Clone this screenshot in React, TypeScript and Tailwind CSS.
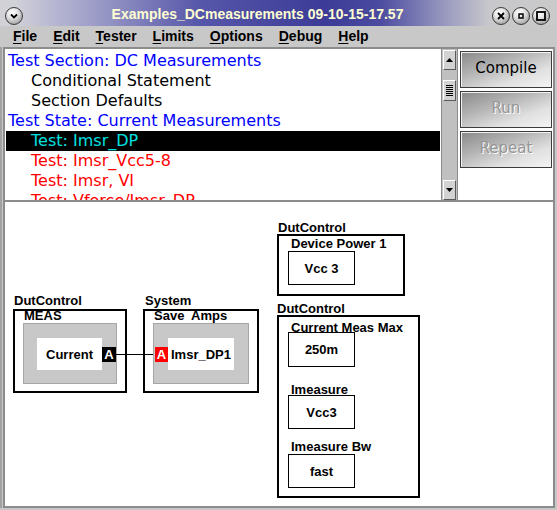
import React from 'react';

const rows = [
  { text: 'Test Section: DC Measurements', cls: 'pl-[2px] text-[#0000ff]' },
  { text: 'Conditional Statement', cls: 'pl-[25px] text-black' },
  { text: 'Section Defaults', cls: 'pl-[25px] text-black' },
  { text: 'Test State: Current Measurements', cls: 'pl-[2px] text-[#0000ff]' },
  { text: 'Test: Imsr_DP', cls: 'pl-[25px] bg-black text-[#00e0e0]' },
  { text: 'Test: Imsr_Vcc5-8', cls: 'pl-[25px] text-[#ff0000]' },
  { text: 'Test: Imsr, VI', cls: 'pl-[25px] text-[#ff0000]' },
  { text: 'Test: Vforce/Imsr_DP', cls: 'pl-[25px] text-[#ff0000]' },
];

const menus = ['File', 'Edit', 'Tester', 'Limits', 'Options', 'Debug', 'Help'];

function Circle({ children }: { children?: React.ReactNode }) {
  return (
    <div className="flex h-[18px] w-[18px] items-center justify-center rounded-full border border-[#3a3a3a] bg-[radial-gradient(circle_at_40%_30%,#ffffff_0%,#e6e6e6_35%,#aaaaaa_75%,#7a7a7a_100%)]">
      {children}
    </div>
  );
}

function ArrowButton({ down }: { down?: boolean }) {
  return (
    <div className="flex h-[20px] w-[13px] items-center justify-center border border-t-white border-l-white border-r-[#5a5a5a] border-b-[#5a5a5a] bg-[#d2d2d2]">
      <svg width="7" height="4" viewBox="0 0 7 4">
        <path d={down ? 'M0 0 H7 L3.5 4 Z' : 'M0 4 H7 L3.5 0 Z'} fill="#000" />
      </svg>
    </div>
  );
}

function ActionButton({ label, disabled }: { label: string; disabled?: boolean }) {
  return (
    <div
      className={`flex h-[37px] w-[92px] items-center justify-center border border-[#3c3c3c] bg-[linear-gradient(160deg,#888888_0%,#b8b8b8_40%,#e0e0e0_70%,#f4f4f4_100%)] shadow-[inset_1px_1px_0_#f2f2f2] pb-[3px] text-[15px] ${
        disabled ? 'text-[#969696] [text-shadow:1px_1px_0_#ffffff]' : 'text-black'
      }`}
    >
      {label}
    </div>
  );
}

function ValueBox({ children, tall }: { children: React.ReactNode; tall?: boolean }) {
  return (
    <div className={`flex w-[67px] items-center justify-center border border-black ${tall ? 'h-[35px]' : 'h-[34px]'}`}>
      {children}
    </div>
  );
}

export default function App() {
  return (
    <div className="h-[510px] w-[557px] overflow-hidden bg-[#c8c8c8] font-['Liberation_Sans',Arial,sans-serif]">
      {/* Title bar */}
      <div className="flex h-[26px] items-center pt-[3px] bg-[linear-gradient(to_right,#d2d2d6_0%,#d0d0d8_3%,#b6b6d2_10%,#5656aa_36%,#3c3c98_58%,#4a4aa0_68%,#9a9ac0_80%,#c8c8cc_88%,#cacaca_100%)]">
        <div className="ml-[5px] mt-[2px]">
          <Circle>
            <svg width="10" height="10" viewBox="0 0 10 10">
              <path d="M2 3.5 L5 6.5 L8 3.5" stroke="#000" strokeWidth="1.8" fill="none" />
            </svg>
          </Circle>
        </div>
        <div className="flex-1 text-center text-[14px] font-bold text-[#ffffd2]">
          Examples_DCmeasurements 09-10-15-17.57
        </div>
        <div className="mr-[7px] mt-[2px] flex gap-[2px]">
          <Circle>
            <svg width="8" height="8" viewBox="0 0 8 8">
              <path d="M1 1 L7 7 M7 1 L1 7" stroke="#000" strokeWidth="1.8" />
            </svg>
          </Circle>
          <Circle>
            <svg width="6" height="6" viewBox="0 0 6 6">
              <rect x="1" y="1" width="4" height="4" stroke="#000" strokeWidth="1.5" fill="none" />
            </svg>
          </Circle>
          <Circle>
            <svg width="10" height="10" viewBox="0 0 10 10">
              <rect x="1" y="1" width="8" height="8" stroke="#000" strokeWidth="1.8" fill="none" />
            </svg>
          </Circle>
        </div>
      </div>

      {/* Menu bar */}
      <div className="flex h-[21px] gap-[16px] pl-[13px] text-[14px] font-bold leading-[20px] text-black">
        {menus.map((m) => (
          <span key={m}>
            <span className="underline underline-offset-2">{m[0]}</span>
            {m.slice(1)}
          </span>
        ))}
      </div>

      <div className="border-l-2 border-[#a2a2a2] pl-px">
        {/* Test list, scrollbar and buttons */}
        <div className="flex h-[155px] w-[552px] border-2 border-[#8c8c8c] bg-white">
          <div className="w-[436px] overflow-hidden pl-px pr-px pt-[2px] font-['DejaVu_Sans',sans-serif] text-[16px] leading-[20px]">
            {rows.map((r) => (
              <div key={r.text} className={`h-[20px] whitespace-nowrap ${r.cls}`}>
                {r.text}
              </div>
            ))}
          </div>
          <div className="flex w-[17px] flex-col border-x border-[#8c8c8c] bg-[#c0c0c0] px-px pt-px">
            <ArrowButton />
            <div className="mt-[10px] flex h-[21px] w-[13px] flex-col items-center justify-center gap-px border border-t-white border-l-white border-r-[#5a5a5a] border-b-[#5a5a5a] bg-[#d2d2d2]">
              <div className="h-px w-[7px] bg-black" />
              <div className="h-px w-[7px] bg-black" />
              <div className="h-px w-[7px] bg-black" />
              <div className="h-px w-[7px] bg-black" />
              <div className="h-px w-[7px] bg-black" />
              <div className="h-px w-[7px] bg-black" />
            </div>
            <div className="mt-auto">
              <ArrowButton down />
            </div>
          </div>
          <div className="flex w-[95px] flex-col gap-[3px] pl-[2px] pt-[2px] font-['DejaVu_Sans',sans-serif]">
            <ActionButton label="Compile" />
            <ActionButton label="Run" disabled />
            <ActionButton label="Repeat" disabled />
          </div>
        </div>

        {/* Diagram canvas: nodes sit at their own places */}
        <div className="relative h-[306px] w-[552px] border-x-2 border-b-2 border-[#8c8c8c] bg-white text-[13px] font-bold leading-[15px] text-black">
          {/* DutControl / MEAS */}
          <div className="absolute left-[8px] top-[91px] w-[114px]">
            <div className="h-[16px] pl-px">DutControl</div>
            <div className="h-[84px] border-2 border-black">
              <div className="-mt-[3px] h-[15px] pl-[9px]">MEAS</div>
              <div className="ml-[8px] flex h-[61px] w-[94px] items-start border border-[#a6a6a6] bg-[#c8c8c8] pl-[13px] pt-[14px]">
                <div className="flex h-[32px] w-[65px] items-center justify-center bg-white">Current</div>
                <div className="mt-[9px] flex h-[15px] w-[14px] items-center justify-center bg-black text-white">A</div>
              </div>
            </div>
          </div>

          {/* wire between the two ports */}
          <div className="absolute left-[111px] top-[152px] h-px w-[39px] bg-black" />

          {/* System / Save Amps */}
          <div className="absolute left-[138px] top-[91px] w-[116px]">
            <div className="h-[16px] pl-[2px]">System</div>
            <div className="h-[84px] border-2 border-black">
              <div className="-mt-[3px] h-[15px] whitespace-pre pl-[9px]">Save  Amps</div>
              <div className="ml-[8px] flex h-[61px] w-[96px] items-start border border-[#a6a6a6] bg-[#c8c8c8] pl-px pt-[14px]">
                <div className="mt-[9px] flex h-[15px] w-[13px] items-center justify-center bg-[#ff0000] text-white">A</div>
                <div className="flex h-[32px] w-[66px] items-center justify-center bg-white">Imsr_DP1</div>
              </div>
            </div>
          </div>

          {/* DutControl / Device Power */}
          <div className="absolute left-[272px] top-[18px] w-[128px]">
            <div className="h-[14px] pl-px">DutControl</div>
            <div className="h-[62px] border-2 border-black pl-[9px]">
              <div className="h-[15px] pl-[3px]">Device Power 1</div>
              <ValueBox>Vcc 3</ValueBox>
            </div>
          </div>

          {/* DutControl / current measurement */}
          <div className="absolute left-[272px] top-[99px] w-[143px]">
            <div className="h-[14px]">DutControl</div>
            <div className="h-[183px] border-2 border-black pl-[9px] pt-[3px]">
              <div className="h-[12px] pl-[3px]">Current Meas Max</div>
              <ValueBox tall>250m</ValueBox>
              <div className="mt-[15px] h-[13px] pl-[3px]">Imeasure</div>
              <ValueBox>Vcc3</ValueBox>
              <div className="mt-[10px] h-[15px] pl-[3px]">Imeasure Bw</div>
              <ValueBox>fast</ValueBox>
            </div>
          </div>
        </div>
      </div>
    </div>
  );
}
